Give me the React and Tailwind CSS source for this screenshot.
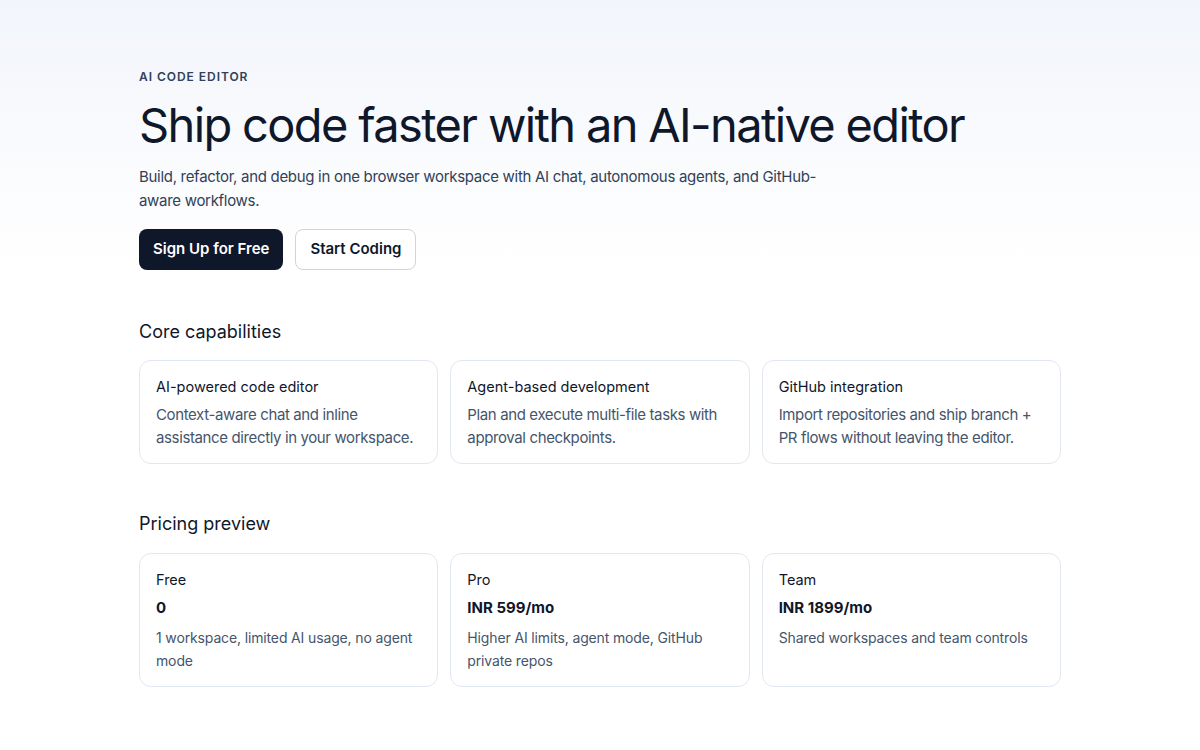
const capabilities = [
  {
    title: 'AI-powered code editor',
    body: 'Context-aware chat and inline assistance directly in your workspace.',
  },
  {
    title: 'Agent-based development',
    body: 'Plan and execute multi-file tasks with approval checkpoints.',
  },
  {
    title: 'GitHub integration',
    body: 'Import repositories and ship branch + PR flows without leaving the editor.',
  },
];

const plans = [
  { name: 'Free', price: '0', body: '1 workspace, limited AI usage, no agent mode' },
  { name: 'Pro', price: 'INR 599/mo', body: 'Higher AI limits, agent mode, GitHub private repos' },
  { name: 'Team', price: 'INR 1899/mo', body: 'Shared workspaces and team controls' },
];

export default function App() {
  return (
    <div
      className="min-h-screen bg-white text-slate-900"
      style={{ fontFamily: 'Inter, "Noto Sans", sans-serif' }}
    >
      {/* Hero */}
      <section className="bg-gradient-to-b from-[#f2f5fb] to-white">
        <div className="mx-auto max-w-[922px] pt-[69px]">
          <p className="text-xs font-semibold uppercase tracking-[0.08em] text-slate-700">
            AI code editor
          </p>
          <h1 className="mt-4 text-[47px] leading-none font-normal tracking-[-0.035em] text-slate-900">
            Ship code faster with an AI-native editor
          </h1>
          <p className="mt-[17px] max-w-[680px] text-[15px] leading-6 tracking-[-0.02em] text-slate-700">
            Build, refactor, and debug in one browser workspace with AI chat, autonomous agents, and GitHub-aware workflows.
          </p>
          <div className="mt-4 flex gap-3">
            <button className="rounded-lg bg-slate-900 px-3.5 py-[9px] text-[15px] font-semibold text-white">
              Sign Up for Free
            </button>
            <button className="rounded-lg border border-slate-300 bg-white px-3.5 py-2 text-[15px] font-semibold text-slate-900">
              Start Coding
            </button>
          </div>
        </div>
      </section>

      <main className="mx-auto max-w-[922px] pb-16">
        {/* Core capabilities */}
        <section className="mt-[48px]">
          <h2 className="text-lg font-normal text-slate-900">Core capabilities</h2>
          <div className="mt-[14px] grid grid-cols-3 gap-3">
            {capabilities.map((c) => (
              <div key={c.title} className="rounded-xl border border-slate-200 bg-white px-4 pt-3.5 pb-3.5">
                <h3 className="text-[14.5px] leading-6 font-normal text-slate-900">{c.title}</h3>
                <p className="mt-1 text-[15px] leading-[23px] tracking-[-0.025em] text-slate-600">{c.body}</p>
              </div>
            ))}
          </div>
        </section>

        {/* Pricing preview */}
        <section className="mt-[46px]">
          <h2 className="text-lg font-normal text-slate-900">Pricing preview</h2>
          <div className="mt-[15px] grid grid-cols-3 gap-3">
            {plans.map((p) => (
              <div key={p.name} className="rounded-xl border border-slate-200 bg-white px-4 pt-3.5 pb-3.5">
                <h3 className="text-[14.5px] leading-6 font-normal text-slate-900">{p.name}</h3>
                <p className="mt-1 text-[15px] leading-6 font-bold text-slate-900">{p.price}</p>
                <p className="mt-1.5 text-sm leading-[23px] tracking-[-0.01em] text-slate-600">{p.body}</p>
              </div>
            ))}
          </div>
        </section>
      </main>
    </div>
  );
}
